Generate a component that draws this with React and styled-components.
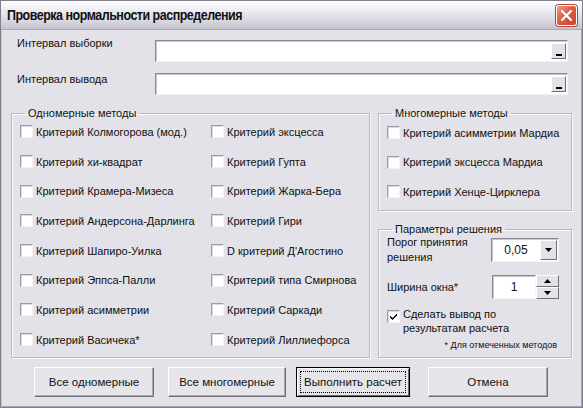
import React from 'react';
import styled, { createGlobalStyle } from 'styled-components';

const GlobalStyle = createGlobalStyle`
  html, body {
    margin: 0;
    padding: 0;
    background: #e3e2e8;
  }
  * { box-sizing: border-box; }
`;

const Window = styled.div`
  width: 583px;
  height: 408px;
  display: flex;
  flex-direction: column;
  background: #e3e2e8;
  border: 1px solid #7f7e8c;
  box-shadow: inset 1px 0 0 #c9c8d2, inset -1px 0 0 #a3a2b0, inset 0 -1px 0 #a3a2b0;
  font-family: "Liberation Sans", Arial, sans-serif;
  font-size: 11px;
  color: #111;
  overflow: hidden;
`;

const TitleBar = styled.div`
  height: 29px;
  flex: none;
  display: flex;
  align-items: center;
  justify-content: space-between;
  padding: 0 5px 0 6px;
  background: linear-gradient(#ffffff 0%, #ecebf1 35%, #d6d5de 75%, #c4c3ce 100%);
  border-bottom: 1px solid #a9a8b5;
`;

const Title = styled.div`
  font-family: "Liberation Sans", sans-serif;
  font-weight: bold;
  font-size: 12.5px;
  letter-spacing: -0.5px;
  transform: scaleY(1.15);
  color: #111;
`;

const CloseButton = styled.div`
  width: 21px;
  height: 21px;
  border-radius: 3px;
  border: 1px solid #ffffff;
  box-shadow: 0 0 0 1px #b24a3c;
  background: linear-gradient(135deg, #f0a08f 0%, #df5c44 45%, #c8442c 100%);
  display: flex;
  align-items: center;
  justify-content: center;
`;

const Body = styled.div`
  flex: 1;
  display: flex;
  flex-direction: column;
  padding: 10px 10px 0 10px;
`;

const FieldRow = styled.div`
  display: flex;
  align-items: center;
  height: 22px;
  margin-bottom: ${p => p.$gap || 0}px;
`;

const FieldLabel = styled.div`
  width: 144px;
  padding-left: 6px;
  padding-bottom: ${p => p.$lift}px;
`;

const RangeInput = styled.div`
  flex: 1;
  height: 22px;
  margin-right: 4px;
  background: #fff;
  border: 1px solid;
  border-color: #8a8992 #f4f4f6 #f4f4f6 #8a8992;
  box-shadow: inset 1px 1px 0 #c8c7cc;
  display: flex;
  justify-content: flex-end;
  align-items: flex-end;
  padding: 0 1px 2px 0;
`;

const PickButton = styled.div`
  width: 15px;
  height: 16px;
  background: #e3e2e8;
  border: 1px solid;
  border-color: #ffffff #6f6e76 #6f6e76 #ffffff;
  display: flex;
  align-items: flex-end;
  justify-content: center;
  padding-bottom: 2px;
  &::after {
    content: '';
    width: 6px;
    height: 2px;
    background: #000;
  }
`;

const Columns = styled.div`
  display: flex;
  gap: 8px;
  margin-top: 12px;
`;

const Group = styled.fieldset`
  margin: 0;
  min-width: 0;
  padding: 0 0 0 8px;
  width: ${p => p.$width}px;
  height: ${p => p.$height}px;
  border: 1px solid #b9b8c0;
  box-shadow: inset 1px 1px 0 #fbfbfd, 1px 1px 0 #fbfbfd;
`;

const Legend = styled.legend`
  padding: 0 3px;
  margin-left: 5px;
  font-size: 11px;
`;

const MethodGrid = styled.div`
  display: grid;
  grid-template-columns: 191px 1fr;
  grid-auto-flow: column;
  grid-template-rows: repeat(8, 29.7px);
  margin-top: -2px;
`;

const MethodList = styled.div`
  display: grid;
  grid-template-rows: repeat(3, 29.5px);
  margin-top: -1px;
`;

const CheckRow = styled.label`
  display: flex;
  align-items: ${p => (p.$top ? 'flex-start' : 'center')};
  gap: 3px;
  white-space: nowrap;
  line-height: 14px;
`;

const Box = styled.span`
  width: 13px;
  height: 13px;
  flex: none;
  background: #fff;
  border: 1px solid;
  border-color: #9d9ca4 #f3f3f5 #f3f3f5 #9d9ca4;
  box-shadow: inset 1px 1px 0 #dcdbe0;
  display: flex;
  align-items: center;
  justify-content: center;
  margin-top: ${p => (p.$top ? '3px' : '0')};
`;

const RightColumn = styled.div`
  display: flex;
  flex-direction: column;
  gap: 12px;
`;

const ParamRow = styled.div`
  display: flex;
  align-items: center;
  justify-content: space-between;
  padding-right: 12px;
  margin-bottom: ${p => p.$gap || 0}px;
`;

const ParamLabel = styled.div`
  line-height: 15px;
`;

const SunkenBox = styled.div`
  width: ${p => p.$width}px;
  height: 24px;
  background: #fff;
  border: 1px solid;
  border-color: #8a8992 #f4f4f6 #f4f4f6 #8a8992;
  box-shadow: inset 1px 1px 0 #c8c7cc;
  display: flex;
  align-items: center;
`;

const BoxValue = styled.span`
  flex: 1;
  text-align: center;
  font-size: 12px;
`;

const DropButton = styled.div`
  width: 17px;
  height: 20px;
  margin-right: 1px;
  background: #e3e2e8;
  border: 1px solid;
  border-color: #ffffff #6f6e76 #6f6e76 #ffffff;
  display: flex;
  align-items: center;
  justify-content: center;
`;

const Spinner = styled.div`
  display: flex;
`;

const SpinButtons = styled.div`
  display: flex;
  flex-direction: column;
`;

const SpinButton = styled.div`
  width: 23px;
  height: 12px;
  background: #e3e2e8;
  border: 1px solid;
  border-color: #ffffff #6f6e76 #6f6e76 #ffffff;
  display: flex;
  align-items: center;
  justify-content: center;
`;

const Note = styled.div`
  font-size: 9px;
  text-align: right;
  padding-right: 14px;
  margin-top: 5px;
`;

const ButtonRow = styled.div`
  display: flex;
  padding-left: 23px;
  margin-top: 9px;
`;

const Button = styled.button`
  width: ${p => p.$width}px;
  height: 30px;
  margin: 0 0 0 ${p => p.$ml || 0}px;
  font-family: "Liberation Sans", Arial, sans-serif;
  font-size: 11.5px;
  color: #111;
  background: #e6e5ea;
  border: 1px solid;
  border-color: ${p => (p.$default ? '#000' : '#ffffff #6f6e76 #6f6e76 #ffffff')};
  box-shadow: ${p => (p.$default ? 'inset 1px 1px 0 #fff, inset -1px -1px 0 #6f6e76' : 'inset -1px -1px 0 #a9a8b0')};
  outline: ${p => (p.$default ? '1px dotted #000' : 'none')};
  outline-offset: -5px;
  padding: 0;
`;

const Arrow = ({ up }) => (
  <svg width="7" height="4" viewBox="0 0 7 4">
    <path d={up ? 'M3.5 0 L7 4 L0 4 Z' : 'M0 0 L7 0 L3.5 4 Z'} fill="#000" />
  </svg>
);

const Check = () => (
  <svg width="9" height="9" viewBox="0 0 9 9">
    <path d="M1 3.5 L3.5 6 L8 1.5 L8 3.5 L3.5 8 L1 5.5 Z" fill="#000" />
  </svg>
);

const Checkbox = ({ children, checked, top }) => (
  <CheckRow $top={top}>
    <Box $top={top}>{checked && <Check />}</Box>
    <span>{children}</span>
  </CheckRow>
);

const univariate = [
  'Критерий Колмогорова (мод.)',
  'Критерий хи-квадрат',
  'Критерий Крамера-Мизеса',
  'Критерий Андерсона-Дарлинга',
  'Критерий Шапиро-Уилка',
  'Критерий Эппса-Палли',
  'Критерий асимметрии',
  'Критерий Васичека*',
  'Критерий эксцесса',
  'Критерий Гупта',
  'Критерий Жарка-Бера',
  'Критерий Гири',
  'D критерий Д\'Агостино',
  'Критерий типа Смирнова',
  'Критерий Саркади',
  'Критерий Лиллиефорса',
];

const multivariate = [
  'Критерий асимметрии Мардиа',
  'Критерий эксцесса Мардиа',
  'Критерий Хенце-Цирклера',
];

export default function App() {
  return (
    <>
      <GlobalStyle />
      <Window>
        <TitleBar>
          <Title>Проверка нормальности распределения</Title>
          <CloseButton>
            <svg width="11" height="11" viewBox="0 0 11 11">
              <path d="M1 1 L10 10 M10 1 L1 10" stroke="#fff" strokeWidth="2.2" strokeLinecap="round" />
            </svg>
          </CloseButton>
        </TitleBar>
        <Body>
          <FieldRow $gap={11}>
            <FieldLabel $lift={16}>Интервал выборки</FieldLabel>
            <RangeInput><PickButton /></RangeInput>
          </FieldRow>
          <FieldRow>
            <FieldLabel $lift={10}>Интервал вывода</FieldLabel>
            <RangeInput><PickButton /></RangeInput>
          </FieldRow>

          <Columns>
            <Group $width={361} $height={251}>
              <Legend>Одномерные методы</Legend>
              <MethodGrid>
                {univariate.map(name => (
                  <Checkbox key={name}>{name}</Checkbox>
                ))}
              </MethodGrid>
            </Group>

            <RightColumn>
              <Group $width={194} $height={104}>
                <Legend>Многомерные методы</Legend>
                <MethodList>
                  {multivariate.map(name => (
                    <Checkbox key={name}>{name}</Checkbox>
                  ))}
                </MethodList>
              </Group>
              <Group $width={194} $height={135}>
                <Legend>Параметры решения</Legend>
                <ParamRow $gap={10}>
                  <ParamLabel>Порог принятия<br />решения</ParamLabel>
                  <SunkenBox $width={68}>
                    <BoxValue>0,05</BoxValue>
                    <DropButton><Arrow /></DropButton>
                  </SunkenBox>
                </ParamRow>
                <ParamRow $gap={8}>
                  <ParamLabel>Ширина окна*</ParamLabel>
                  <Spinner>
                    <SunkenBox $width={44}>
                      <BoxValue>1</BoxValue>
                    </SunkenBox>
                    <SpinButtons>
                      <SpinButton><Arrow up /></SpinButton>
                      <SpinButton><Arrow /></SpinButton>
                    </SpinButtons>
                  </Spinner>
                </ParamRow>
                <Checkbox checked top>
                  Сделать вывод по<br />результатам расчета
                </Checkbox>
                <Note>* Для отмеченных методов</Note>
              </Group>
            </RightColumn>
          </Columns>

          <ButtonRow>
            <Button $width={120}>Все одномерные</Button>
            <Button $width={118} $ml={14}>Все многомерные</Button>
            <Button $width={114} $ml={10} $default>Выполнить расчет</Button>
            <Button $width={120} $ml={18}>Отмена</Button>
          </ButtonRow>
        </Body>
      </Window>
    </>
  );
}
